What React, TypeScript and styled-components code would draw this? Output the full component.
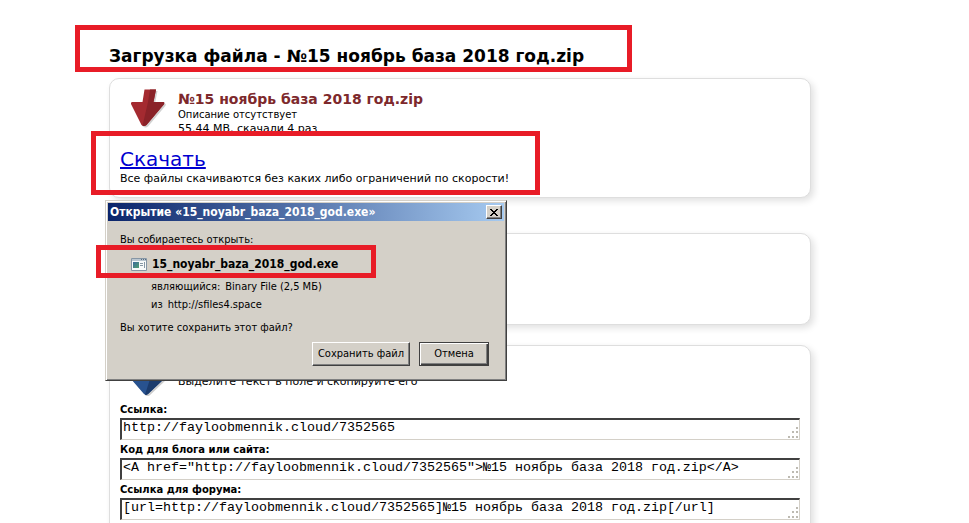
import React, { useId } from "react";
import styled, { createGlobalStyle } from "styled-components";

const GlobalStyle = createGlobalStyle`
  *, *::before, *::after { box-sizing: border-box; }
  body {
    margin: 0;
    background: #fff;
    color: #000;
    font-family: Verdana, "DejaVu Sans", sans-serif;
    font-size: 11px;
  }
`;

const Page = styled.div`
  position: relative;
  height: 100vh;
  overflow: hidden;
  padding: 44px 158px 0 109px;
`;

const Heading = styled.h1`
  margin: 0 0 10px;
  font-size: 17px;
  line-height: 24px;
`;

const Card = styled.section<{ $gap?: number }>`
  display: flex;
  flex-direction: column;
  min-height: 92px;
  margin-bottom: ${(p) => p.$gap ?? 0}px;
  padding: 10px 10px 11px;
  background: #fff;
  border: 1px solid #dedede;
  border-radius: 10px;
  box-shadow: 3px 3px 7px rgba(0, 0, 0, 0.12);
`;

const CardHeader = styled.div`
  display: flex;
  gap: 8px;
  min-height: 46px;
`;

const ArrowIcon = styled.svg`
  flex: none;
  width: 40px;
  height: 40px;
  margin-left: 10px;
`;

const FileInfo = styled.div`
  padding-top: 1px;
`;

const FileName = styled.h2`
  margin: 0;
  color: #7d292c;
  font-size: 14px;
  line-height: 18px;
`;

const InfoLine = styled.p<{ $small?: boolean }>`
  margin: 0;
  font-size: ${(p) => (p.$small ? 10 : 11)}px;
  line-height: 14px;
`;

const DownloadLink = styled.a`
  align-self: flex-start;
  margin-top: 11px;
  color: #0000d0;
  font-size: 20px;
  line-height: 25px;
`;

const CopyHint = styled.p`
  margin: 19px 0 0;
  line-height: 14px;
`;

const Field = styled.div`
  display: flex;
  flex-direction: column;
  margin-bottom: 2px;
`;

const FieldLabel = styled.label`
  font-size: 10px;
  font-weight: bold;
  line-height: 16px;
`;

const AreaWrap = styled.div`
  position: relative;
  display: flex;
`;

const Area = styled.textarea`
  flex: 1;
  min-width: 0;
  height: 22px;
  margin: 0;
  padding: 0 1px;
  overflow: hidden;
  resize: none;
  border: 2px solid;
  border-color: #404040 #d4d0c8 #d4d0c8 #404040;
  border-right-width: 1px;
  border-bottom-width: 1px;
  border-radius: 0;
  outline: none;
  background: #fff;
  color: #000;
  font-family: "Courier New", "Liberation Mono", monospace;
  font-size: 10pt;
  line-height: 16px;
  white-space: pre;
`;

const Grip = styled.svg`
  position: absolute;
  right: 2px;
  bottom: 2px;
  width: 11px;
  height: 11px;
  pointer-events: none;
`;

const Dialog = styled.div`
  position: absolute;
  left: 105px;
  top: 200px;
  width: 402px;
  padding: 2px;
  background: #d4d0c8;
  border: 1px solid;
  border-color: #d4d0c8 #404040 #404040 #d4d0c8;
  box-shadow: inset 1px 1px #fff, inset -1px -1px #808080;
  font-family: Tahoma, "DejaVu Sans Condensed", "DejaVu Sans", sans-serif;
  font-size: 11px;
  line-height: 14px;
`;

const TitleBar = styled.div`
  display: flex;
  align-items: center;
  justify-content: space-between;
  height: 18px;
  padding: 0 2px;
  background: linear-gradient(90deg, #0a246a, #a6caf0);
  color: #fff;
  font-size: 12px;
  font-weight: bold;
`;

const bevel = `
  background: #d4d0c8;
  border: 1px solid;
  border-color: #fff #404040 #404040 #fff;
  border-radius: 0;
  box-shadow: inset -1px -1px #808080;
  color: #000;
`;

const CloseButton = styled.button`
  ${bevel}
  display: flex;
  align-items: center;
  justify-content: center;
  width: 16px;
  height: 14px;
  padding: 0;
`;

const DialogBody = styled.div`
  display: flex;
  flex-direction: column;
  padding: 12px 15px 12px 12px;
`;

const DialogText = styled.p`
  margin: 0;
`;

const FileRow = styled.div`
  display: flex;
  align-items: center;
  gap: 5px;
  margin: 10px 0 9px;
  padding-left: 11px;
  font-size: 12px;
  font-weight: bold;
`;

const DetailRow = styled.div`
  display: flex;
  gap: 5px;
  margin-bottom: 4px;
  padding-left: 31px;
`;

const Question = styled(DialogText)`
  margin-top: 5px;
`;

const Buttons = styled.div`
  display: flex;
  justify-content: flex-end;
  gap: 9px;
  margin-top: 7px;
`;

const DialogButton = styled.button<{ $isDefault?: boolean }>`
  ${bevel}
  width: ${(p) => (p.$isDefault ? 70 : 98)}px;
  height: 24px;
  padding: 0;
  font: inherit;
  ${(p) =>
    p.$isDefault &&
    `
    border-color: #404040;
    box-shadow: inset 1px 1px #fff, inset -1px -1px #404040, inset -2px -2px #808080;
  `}
`;

const Highlight = styled.div<{ $x: number; $y: number; $w: number; $h: number }>`
  position: absolute;
  left: ${(p) => p.$x}px;
  top: ${(p) => p.$y}px;
  width: ${(p) => p.$w}px;
  height: ${(p) => p.$h}px;
  border: 5px solid #e81c27;
  pointer-events: none;
`;

function RedArrow() {
  const outline =
    "M14.500 .5H26L23.500 13H33.500q1.500.5.500 2.200L16.500 36q-2.500 2-5 0L1 15q-.5-1.700 1-2H12.500z";
  return (
    <ArrowIcon viewBox="0 0 40 40" aria-hidden="true">
      <path d={outline} fill="#000" opacity="0.18" transform="translate(1.5 1.5)" />
      <path d={outline} fill="#a42a30" />
      <path d="M20 .5H26L23.500 13H33.500q1.500.5.500 2.200L16.500 36q-2 1.500-4 .7L18 13z" fill="#8a2228" />
    </ArrowIcon>
  );
}

function BlueArrow() {
  const outline = "M10 2H24V14H34V23L18 38q-2 1.600-4 0L1 23V14H10z";
  return (
    <ArrowIcon viewBox="0 0 40 40" aria-hidden="true">
      <path d={outline} fill="#000" opacity="0.2" transform="translate(1.5 1.5)" />
      <path d={outline} fill="#28528f" />
      <path d="M20 2H24V14H34V23L18 38q-1.500 1.300-3 .7L20 23z" fill="#1b3b6c" />
    </ArrowIcon>
  );
}

function CopyField({ label, value }: { label: string; value: string }) {
  const id = useId();
  return (
    <Field>
      <FieldLabel htmlFor={id}>{label}</FieldLabel>
      <AreaWrap>
        <Area id={id} rows={1} readOnly defaultValue={value} />
        <Grip viewBox="0 0 11 11" fill="#bdbab2" aria-hidden="true">
          <path d="M9 0h2v2H9zM5 4h2v2H5zM9 4h2v2H9zM1 9h2v2H1zM5 9h2v2H5zM9 9h2v2H9z" />
        </Grip>
      </AreaWrap>
    </Field>
  );
}

function OpenDialog() {
  return (
    <Dialog role="dialog" aria-labelledby="dialog-title">
      <TitleBar>
        <span id="dialog-title">Открытие «15_noyabr_baza_2018_god.exe»</span>
        <CloseButton aria-label="Закрыть">
          <svg width="8" height="7" viewBox="0 0 8 7" shapeRendering="crispEdges" aria-hidden="true">
            <path d="M0 0h2v1h1v1h2V1h1V0h2v1H7v1H6v1H5v1h1v1h1v1h1v1H6V6H5V5H3v1H2v1H0V6h1V5h1V4h1V3H2V2H1V1H0z" />
          </svg>
        </CloseButton>
      </TitleBar>
      <DialogBody>
        <DialogText>Вы собираетесь открыть:</DialogText>
        <FileRow>
          <svg width="16" height="13" viewBox="0 0 16 13" aria-hidden="true">
            <defs>
              <linearGradient id="pane" x2="1" y2="1">
                <stop stopColor="#3e6b9c" />
                <stop offset="1" stopColor="#4f9f70" />
              </linearGradient>
            </defs>
            <path d="M.5.5h15v12H.5z" fill="#f8fafa" stroke="#8596a5" />
            <path d="M1 1h14v2H1z" fill="#bac6d0" />
            <path d="M10 1h1v1h-1zM12 1h1v1h-1zM14 1h1v1h-1z" fill="#596d80" />
            <path d="M2 4h6v6H2z" fill="url(#pane)" />
            <path d="M9 5h3v1H9zM9 7h3v1H9zM13 4h1v6h-1z" fill="#8798a5" />
          </svg>
          <span>15_noyabr_baza_2018_god.exe</span>
        </FileRow>
        <DetailRow>
          <span>являющийся:</span>
          <span>Binary File (2,5 МБ)</span>
        </DetailRow>
        <DetailRow>
          <span>из</span>
          <span>http://sfiles4.space</span>
        </DetailRow>
        <Question>Вы хотите сохранить этот файл?</Question>
        <Buttons>
          <DialogButton>Сохранить файл</DialogButton>
          <DialogButton $isDefault>Отмена</DialogButton>
        </Buttons>
      </DialogBody>
    </Dialog>
  );
}

export default function App() {
  return (
    <>
      <GlobalStyle />
      <Page>
        <Heading>Загрузка файла - №15 ноябрь база 2018 год.zip</Heading>
        <Card $gap={35}>
          <CardHeader>
            <RedArrow />
            <FileInfo>
              <FileName>№15 ноябрь база 2018 год.zip</FileName>
              <InfoLine $small>Описание отсутствует</InfoLine>
              <InfoLine>55.44 MB, скачали 4 раз</InfoLine>
            </FileInfo>
          </CardHeader>
          <DownloadLink href="#download">Скачать</DownloadLink>
          <InfoLine>Все файлы скачиваются без каких либо ограничений по скорости!</InfoLine>
        </Card>
        <Card $gap={20} />
        <Card>
          <CardHeader>
            <BlueArrow />
            <CopyHint>Выделите текст в поле и скопируйте его</CopyHint>
          </CardHeader>
          <CopyField label="Ссылка:" value="http://fayloobmennik.cloud/7352565" />
          <CopyField
            label="Код для блога или сайта:"
            value={'<A href="http://fayloobmennik.cloud/7352565">№15 ноябрь база 2018 год.zip</A>'}
          />
          <CopyField
            label="Ссылка для форума:"
            value="[url=http://fayloobmennik.cloud/7352565]№15 ноябрь база 2018 год.zip[/url]"
          />
        </Card>
        <OpenDialog />
        <Highlight $x={75} $y={25} $w={557} $h={47} />
        <Highlight $x={91} $y={131} $w={449} $h={64} />
        <Highlight $x={96} $y={245} $w={280} $h={33} />
      </Page>
    </>
  );
}
